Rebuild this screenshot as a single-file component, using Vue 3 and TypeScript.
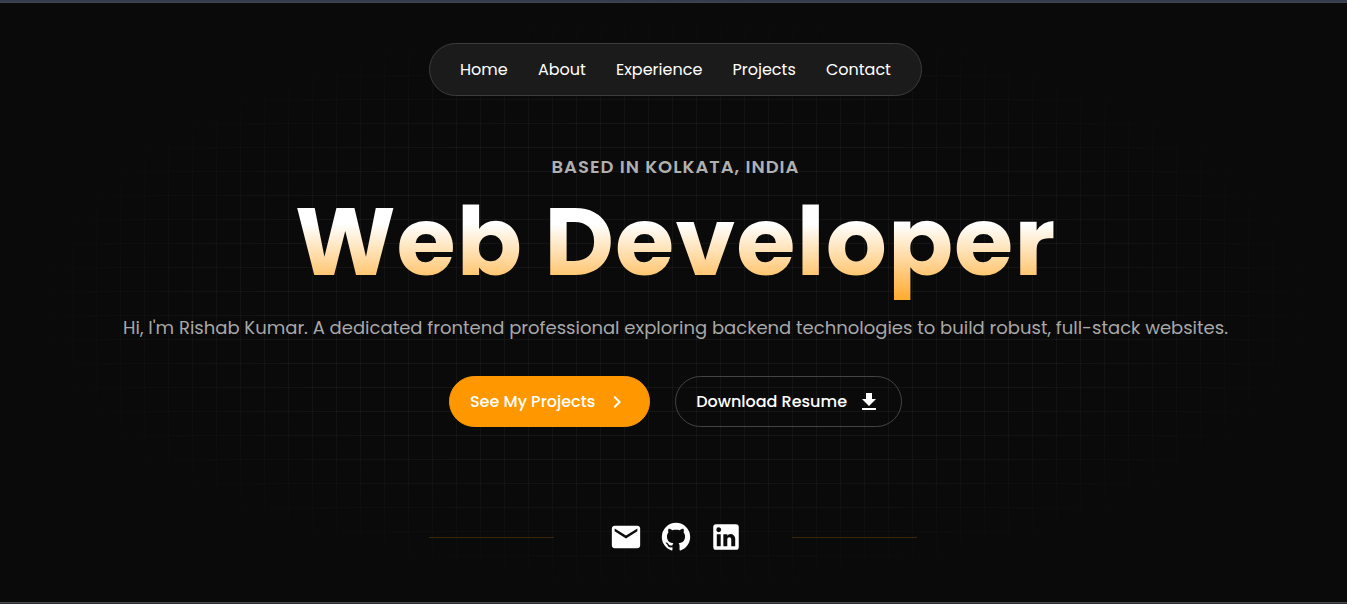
<script setup lang="ts">
interface NavLink {
  label: string
  href: string
}

const navLinks: NavLink[] = [
  { label: 'Home', href: '#home' },
  { label: 'About', href: '#about' },
  { label: 'Experience', href: '#experience' },
  { label: 'Projects', href: '#projects' },
  { label: 'Contact', href: '#contact' },
]

interface SocialLink extends NavLink {
  icon: string
}

const socialLinks: SocialLink[] = [
  {
    label: 'Email',
    href: '#email',
    icon: 'M20 4H4c-1.1 0-2 .9-2 2v12c0 1.100.9 2 2 2h16c1.100 0 2-.9 2-2V6c0-1.100-.9-2-2-2zm0 4l-8 5-8-5V6l8 5 8-5v2z',
  },
  {
    label: 'GitHub',
    href: '#github',
    icon: 'M12 2A10 10 0 0 0 2 12c0 4.420 2.870 8.170 6.840 9.500.5.080.660-.230.660-.5v-1.690c-2.770.6-3.360-1.340-3.360-1.340-.460-1.160-1.110-1.470-1.110-1.470-.910-.620.070-.6.070-.6 1 .070 1.530 1.030 1.530 1.030.870 1.520 2.340 1.070 2.910.830.090-.650.350-1.090.630-1.340-2.220-.250-4.550-1.110-4.550-4.920 0-1.110.380-2 1.030-2.710-.1-.250-.450-1.290.1-2.640 0 0 .840-.270 2.750 1.020.790-.220 1.650-.330 2.500-.330s1.710.110 2.500.330c1.910-1.290 2.750-1.020 2.750-1.020.550 1.350.2 2.390.1 2.640.650.710 1.030 1.600 1.030 2.710 0 3.820-2.340 4.660-4.570 4.910.360.310.690.920.690 1.850V21c0 .270.160.590.670.5C19.140 20.160 22 16.420 22 12A10 10 0 0 0 12 2z',
  },
  {
    label: 'LinkedIn',
    href: '#linkedin',
    icon: 'M19 3a2 2 0 0 1 2 2v14a2 2 0 0 1-2 2H5a2 2 0 0 1-2-2V5a2 2 0 0 1 2-2h14m-.5 15.500v-5.300a3.260 3.260 0 0 0-3.260-3.260c-.850 0-1.840.520-2.320 1.300v-1.110h-2.790v8.370h2.790v-4.930c0-.770.620-1.400 1.390-1.400a1.400 1.400 0 0 1 1.400 1.400v4.930h2.790M6.880 8.560a1.680 1.680 0 0 0 1.680-1.680c0-.930-.750-1.690-1.680-1.690a1.690 1.690 0 0 0-1.690 1.690c0 .930.760 1.680 1.690 1.680m1.390 9.940v-8.370H5.500v8.370h2.770z',
  },
]
</script>

<template>
  <div class="page">
    <div class="hero">
      <nav class="nav" aria-label="Main">
        <a v-for="link in navLinks" :key="link.label" :href="link.href">{{ link.label }}</a>
      </nav>

      <main class="intro">
        <p class="eyebrow">BASED IN KOLKATA, INDIA</p>
        <h1>Web Developer</h1>
        <p class="lead">
          Hi, I'm Rishab Kumar. A dedicated frontend professional exploring backend technologies to build robust, full-stack websites.
        </p>
        <div class="actions">
          <a class="button primary" href="#projects">
            See My Projects
            <svg viewBox="0 0 24 24" aria-hidden="true">
              <path d="M8.590 16.590 13.170 12 8.590 7.410 10 6l6 6-6 6z" />
            </svg>
          </a>
          <a class="button outline" href="#resume">
            Download Resume
            <svg viewBox="0 0 24 24" aria-hidden="true">
              <path d="M19 9h-4V3H9v6H5l7 7 7-7zM5 18v2h14v-2H5z" />
            </svg>
          </a>
        </div>
      </main>

      <footer class="social">
        <span class="rule"></span>
        <div class="icons">
          <a v-for="item in socialLinks" :key="item.label" :href="item.href" :aria-label="item.label">
            <svg viewBox="0 0 24 24" aria-hidden="true"><path :d="item.icon" /></svg>
          </a>
        </div>
        <span class="rule"></span>
      </footer>
    </div>
  </div>
</template>

<style>
body {
  margin: 0;
  background: #0a0a0a;
}
</style>

<style scoped>
.page {
  box-sizing: border-box;
  display: flex;
  min-height: 100vh;
  border-top: 2px solid #343e50;
  border-bottom: 1px solid #292e36;
  background: #0a0a0a;
  color: #fff;
  font-family: Poppins, Inter, "Open Sans", sans-serif;
  font-size: 16px;
}

.hero {
  position: relative;
  isolation: isolate;
  display: flex;
  flex: 1;
  flex-direction: column;
  align-items: center;
  padding: 40px 20px 40px 24px;
  border-top: 1px solid #44474a;
  border-bottom: 1px solid #4a4a4a;
}

/* Faint grid that fades out towards the edges */
.hero::before {
  content: "";
  position: absolute;
  inset: 0;
  z-index: -1;
  background-image:
    linear-gradient(to right, #80808016 1px, transparent 1px),
    linear-gradient(to bottom, #80808016 1px, transparent 1px);
  background-size: 24px 24px;
  mask-image: radial-gradient(ellipse 50% 50% at 50% 50%, #000 60%, transparent 100%);
}

a {
  color: inherit;
  text-decoration: none;
}

svg {
  display: block;
  fill: currentColor;
}

.nav {
  box-sizing: border-box;
  display: flex;
  align-items: center;
  justify-content: space-between;
  width: 493px;
  max-width: 100%;
  padding: 14px 30px;
  border: 1px solid #3c3c3c;
  border-radius: 32px;
  background: #1b1b1b;
  line-height: 23px;
}

.intro {
  display: flex;
  flex-direction: column;
  align-items: center;
  margin-top: 57px;
  text-align: center;
}

.eyebrow {
  margin: 0;
  color: #b0b0b0;
  font-size: 18px;
  font-weight: 600;
  letter-spacing: 1px;
  line-height: 28px;
}

h1 {
  margin: 1px 0 0;
  background: linear-gradient(#fff 42px, #ff9800 135px);
  background-clip: text;
  color: transparent;
  font-size: 96px;
  font-weight: 700;
  letter-spacing: 1px;
  line-height: 120px;
}

.lead {
  margin: 12px 0 0;
  color: #a8a8a8;
  font-size: 18px;
  line-height: 28px;
}

.actions {
  display: flex;
  flex-wrap: wrap;
  justify-content: center;
  gap: 25px;
  margin-top: 34px;
}

.button {
  box-sizing: border-box;
  display: flex;
  align-items: center;
  gap: 10px;
  height: 51px;
  padding: 0 20px;
  border: 1px solid transparent;
  border-radius: 26px;
  font-weight: 500;
}

.button svg {
  width: 24px;
  height: 24px;
}

.primary {
  border-color: #ff9800;
  background: #ff9800;
}

.outline {
  border-color: #444;
}

.social {
  box-sizing: border-box;
  display: flex;
  align-items: center;
  justify-content: space-between;
  width: 493px;
  max-width: 100%;
  margin-top: 93px;
  padding-right: 5px;
}

.rule {
  width: 125px;
  height: 1px;
  background: #3c2508;
}

.icons {
  display: flex;
  gap: 16px;
  padding-left: 6px;
}

.icons svg {
  width: 34px;
  height: 34px;
}
</style>
